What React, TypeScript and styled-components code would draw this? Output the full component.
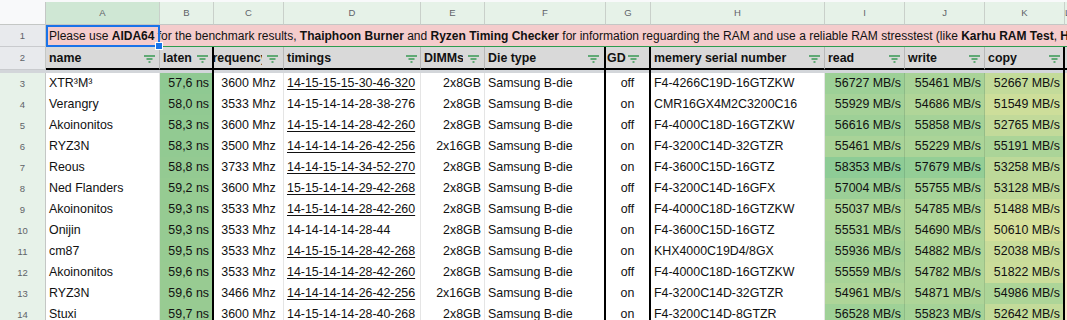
import React from 'react';
import styled, { createGlobalStyle } from 'styled-components';

const GlobalStyle = createGlobalStyle`
  html, body { margin: 0; padding: 0; background: #fff; overflow: hidden; }
  body { font-family: "Liberation Sans", Arial, sans-serif; }
`;

const TEMPLATE = '46px 114px 54px 70px 137px 64px 121px 45px 174px 80px 80px 80px 1fr';

type Align = 'left' | 'right' | 'center';

interface ColDef {
  letter: string;
  head: string;
  headAlign: Align;
  align: Align;
  thick?: boolean;
  gap: number;
  lead?: number;
  pad?: number;
}

const COLS: ColDef[] = [
  { letter: 'A', head: 'name', headAlign: 'left', align: 'left', gap: 4 },
  { letter: 'B', head: 'latency', headAlign: 'left', align: 'right', thick: true, gap: 4 },
  { letter: 'C', head: 'frequency', headAlign: 'center', align: 'center', gap: 5 },
  { letter: 'D', head: 'timings', headAlign: 'left', align: 'left', gap: 3 },
  { letter: 'E', head: 'DIMMs', headAlign: 'left', align: 'right', gap: 5 },
  { letter: 'F', head: 'Die type', headAlign: 'left', align: 'left', thick: true, gap: 5 },
  { letter: 'G', head: 'GDM', headAlign: 'left', align: 'center', thick: true, gap: 10, lead: 2, pad: 1 },
  { letter: 'H', head: 'memery serial number', headAlign: 'left', align: 'left', gap: 4 },
  { letter: 'I', head: 'read', headAlign: 'left', align: 'right', gap: 4 },
  { letter: 'J', head: 'write', headAlign: 'left', align: 'right', gap: 4 },
  { letter: 'K', head: 'copy', headAlign: 'left', align: 'right', thick: true, gap: 3 },
];

interface Entry {
  name: string;
  lat: number;
  freq: number;
  timings: string;
  link: boolean;
  dimms: string;
  gdm: 'on' | 'off';
  serial: string;
  read: number;
  write: number;
  copy: number;
}

const DATA: Entry[] = [
  { name: 'XTR³M³', lat: 57.6, freq: 3600, timings: '14-15-15-15-30-46-320', link: true, dimms: '2x8GB', gdm: 'off', serial: 'F4-4266C19D-16GTZKW', read: 56727, write: 55461, copy: 52667 },
  { name: 'Verangry', lat: 58.0, freq: 3533, timings: '14-15-14-14-28-38-276', link: false, dimms: '2x8GB', gdm: 'on', serial: 'CMR16GX4M2C3200C16', read: 55929, write: 54686, copy: 51549 },
  { name: 'Akoinonitos', lat: 58.3, freq: 3600, timings: '14-15-14-14-28-42-260', link: true, dimms: '2x8GB', gdm: 'off', serial: 'F4-4000C18D-16GTZKW', read: 56616, write: 55858, copy: 52765 },
  { name: 'RYZ3N', lat: 58.3, freq: 3500, timings: '14-14-14-14-26-42-256', link: true, dimms: '2x16GB', gdm: 'on', serial: 'F4-3200C14D-32GTZR', read: 55461, write: 55229, copy: 55191 },
  { name: 'Reous', lat: 58.8, freq: 3733, timings: '14-14-15-14-34-52-270', link: true, dimms: '2x8GB', gdm: 'on', serial: 'F4-3600C15D-16GTZ', read: 58353, write: 57679, copy: 53258 },
  { name: 'Ned Flanders', lat: 59.2, freq: 3600, timings: '15-15-14-14-29-42-268', link: true, dimms: '2x8GB', gdm: 'off', serial: 'F4-3200C14D-16GFX', read: 57004, write: 55755, copy: 53128 },
  { name: 'Akoinonitos', lat: 59.3, freq: 3533, timings: '14-15-14-14-28-42-260', link: true, dimms: '2x8GB', gdm: 'off', serial: 'F4-4000C18D-16GTZKW', read: 55037, write: 54785, copy: 51488 },
  { name: 'Onijin', lat: 59.3, freq: 3533, timings: '14-14-14-14-28-44', link: false, dimms: '2x8GB', gdm: 'on', serial: 'F4-3600C15D-16GTZ', read: 55531, write: 54690, copy: 50610 },
  { name: 'cm87', lat: 59.5, freq: 3533, timings: '14-15-15-14-28-42-268', link: true, dimms: '2x8GB', gdm: 'on', serial: 'KHX4000C19D4/8GX', read: 55936, write: 54882, copy: 52038 },
  { name: 'Akoinonitos', lat: 59.6, freq: 3533, timings: '14-15-14-14-28-42-260', link: true, dimms: '2x8GB', gdm: 'off', serial: 'F4-4000C18D-16GTZKW', read: 55559, write: 54782, copy: 51822 },
  { name: 'RYZ3N', lat: 59.6, freq: 3466, timings: '14-14-14-14-26-42-256', link: true, dimms: '2x16GB', gdm: 'on', serial: 'F4-3200C14D-32GTZR', read: 54961, write: 54871, copy: 54986 },
  { name: 'Stuxi', lat: 59.7, freq: 3600, timings: '14-15-14-14-28-40-268', link: false, dimms: '2x8GB', gdm: 'on', serial: 'F4-3200C14D-8GTZR', read: 56528, write: 55823, copy: 52642 },
];

const lerp = (a: number[], b: number[], t: number) => {
  const k = Math.max(0, Math.min(1, t));
  const c = a.map((v, i) => Math.round(v + (b[i] - v) * k));
  return `rgb(${c[0]}, ${c[1]}, ${c[2]})`;
};

const mbColor = (v: number) => lerp([214, 224, 155], [142, 204, 150], (v - 50610) / (58353 - 50610));
const latColor = (v: number) => lerp([143, 201, 146], [152, 203, 146], (v - 57.6) / (59.7 - 57.6));
const fmtLat = (v: number) => `${v.toFixed(1).replace('.', ',')} ns`;

/* ---------- styled parts ---------- */

const Sheet = styled.div`
  width: 1067px;
  height: 320px;
  overflow: hidden;
  background: #fff;
  font-family: "Liberation Sans", Arial, sans-serif;
  font-size: 12.4px;
  color: #000;
`;

const TopStrip = styled.div`
  height: 2px;
  overflow: hidden;
  background: #f8f9fa;
  padding-left: 57px;
`;

const StripGhost = styled.span`
  display: block;
  margin-top: -9px;
  font-size: 11px;
  line-height: 11px;
  color: #333;
`;

const GridRow = styled.div<{ $h: number }>`
  display: grid;
  grid-template-columns: ${TEMPLATE};
  height: ${(p) => p.$h}px;
`;

const Corner = styled.div`
  background: #f8f9fa;
  border-right: 1px solid #c4c7c5;
  border-bottom: 1px solid #c4c7c5;
`;

const ColLetter = styled.div<{ $selected?: boolean }>`
  background: ${(p) => (p.$selected ? '#cfe7d4' : '#e6f2e8')};
  border-right: 1px solid #c9d0ca;
  border-bottom: 1px solid #c4c7c5;
  color: #5f6368;
  font-size: 9.5px;
  line-height: 22px;
  text-align: center;
`;

const RowNum = styled.div<{ $frozen?: boolean }>`
  background: ${(p) => (p.$frozen ? '#e8eaed' : '#e7f2e9')};
  border-right: 1px solid #c4c7c5;
  border-bottom: 1px solid ${(p) => (p.$frozen ? '#c9cbce' : '#d6ddd7')};
  color: #5f6368;
  font-size: 9.5px;
  line-height: 21px;
  text-align: center;
`;

const Banner = styled.div`
  grid-column: 2 / -1;
  position: relative;
  background: #f4cccc;
  border-bottom: 1px solid #2e9c4f;
  min-width: 0;
`;

const BannerText = styled.div`
  height: 100%;
  overflow: hidden;
  white-space: nowrap;
  padding: 1px 3px 0;
  font-size: 12px;
  line-height: 20px;
  color: #111;
`;

const Selection = styled.div`
  position: absolute;
  left: 0;
  top: 0;
  width: 114px;
  height: 22px;
  box-sizing: border-box;
  border: 2px solid #1a73e8;
  z-index: 3;
`;

const Handle = styled.div`
  position: absolute;
  left: 107px;
  top: 15px;
  width: 8px;
  height: 8px;
  box-sizing: border-box;
  background: #1a73e8;
  border: 1px solid #fff;
`;

const HeadCell = styled.div<{ $thick?: boolean }>`
  display: flex;
  min-width: 0;
  background: #d9d9d9;
  border-right: ${(p) => (p.$thick ? '2px solid #000' : '1px solid #b8b8b8')};
  border-bottom: 2px solid #000;
  font-weight: bold;
  color: #111;
`;

const HeadLabel = styled.div<{ $align: Align; $pad: number }>`
  flex: 1;
  min-width: 0;
  overflow: hidden;
  display: flex;
  justify-content: ${(p) => (p.$align === 'center' ? 'center' : 'flex-start')};
  padding: 2px 0 0 ${(p) => (p.$align === 'center' ? 0 : p.$pad)}px;
  white-space: nowrap;
  line-height: 19px;
`;

const FilterButton = styled.div<{ $gap: number; $lead: number }>`
  flex: none;
  display: flex;
  align-items: center;
  padding: 2px ${(p) => p.$gap}px 0 ${(p) => p.$lead}px;
  background: #d9d9d9;
`;

const HeadFill = styled.div`
  background: #d9d9d9;
  border-bottom: 2px solid #000;
`;

const BandCell = styled.div<{ $thick?: boolean }>`
  background: #d3d6da;
  border-right: ${(p) => (p.$thick ? '2px solid #000' : 'none')};
`;

const Cell = styled.div<{ $align: Align; $bg?: string; $thick?: boolean; $link?: boolean }>`
  min-width: 0;
  overflow: hidden;
  white-space: nowrap;
  padding: 0 3px;
  line-height: 21px;
  text-align: ${(p) => p.$align};
  background: ${(p) => p.$bg || '#fff'};
  border-right: ${(p) => (p.$thick ? '2px solid #000' : '1px solid rgba(0, 0, 0, 0.1)')};
  border-bottom: 1px solid rgba(0, 0, 0, 0.1);
  text-decoration: ${(p) => (p.$link ? 'underline' : 'none')};
  text-underline-offset: 2px;
  color: #111;
`;

const FillCell = styled.div`
  background: #fce5cd;
  border-bottom: 1px solid rgba(0, 0, 0, 0.08);
`;

const FilterIcon = () => (
  <svg width="11" height="8" viewBox="0 0 11 8" aria-hidden="true">
    <g stroke="#1e8e3e" strokeWidth="1.3" strokeLinecap="butt">
      <line x1="0" y1="1" x2="11" y2="1" />
      <line x1="2.5" y1="4" x2="8.5" y2="4" />
      <line x1="4.5" y1="7" x2="6.5" y2="7" />
    </g>
  </svg>
);

export default function App() {
  return (
    <>
      <GlobalStyle />
      <Sheet>
        <TopStrip>
          <StripGhost>mm mm</StripGhost>
        </TopStrip>

        <GridRow $h={23}>
          <Corner />
          {COLS.map((c) => (
            <ColLetter key={c.letter} $selected={c.letter === 'A'}>
              {c.letter}
            </ColLetter>
          ))}
          <ColLetter>L</ColLetter>
        </GridRow>

        <GridRow $h={22}>
          <RowNum $frozen>1</RowNum>
          <Banner>
            <BannerText>
              Please use <b>AIDA64</b> for the benchmark results, <b>Thaiphoon Burner</b> and{' '}
              <b>Ryzen Timing Checker</b> for information reguarding the RAM and use a reliable RAM
              stresstest (like <b>Karhu RAM Test</b>, <b>HCI MemTest</b>) to check stability
            </BannerText>
            <Selection>
              <Handle />
            </Selection>
          </Banner>
        </GridRow>

        <GridRow $h={23}>
          <RowNum $frozen>2</RowNum>
          {COLS.map((c) => (
            <HeadCell key={c.letter} $thick={c.thick}>
              <HeadLabel $align={c.headAlign} $pad={c.pad ?? 3}>
                <span>{c.head}</span>
              </HeadLabel>
              <FilterButton $gap={c.gap} $lead={c.lead ?? 5}>
                <FilterIcon />
              </FilterButton>
            </HeadCell>
          ))}
          <HeadFill />
        </GridRow>

        <GridRow $h={3}>
          <BandCell />
          {COLS.map((c) => (
            <BandCell key={c.letter} $thick={c.thick} />
          ))}
          <BandCell />
        </GridRow>

        {DATA.map((d, i) => (
          <GridRow key={i} $h={21}>
            <RowNum>{i + 3}</RowNum>
            <Cell $align="left">{d.name}</Cell>
            <Cell $align="right" $bg={latColor(d.lat)} $thick>
              {fmtLat(d.lat)}
            </Cell>
            <Cell $align="center">{d.freq} Mhz</Cell>
            <Cell $align="left" $link={d.link}>
              {d.timings}
            </Cell>
            <Cell $align="right">{d.dimms}</Cell>
            <Cell $align="left" $thick>
              Samsung B-die
            </Cell>
            <Cell $align="center" $thick>
              {d.gdm}
            </Cell>
            <Cell $align="left">{d.serial}</Cell>
            <Cell $align="right" $bg={mbColor(d.read)}>
              {d.read} MB/s
            </Cell>
            <Cell $align="right" $bg={mbColor(d.write)}>
              {d.write} MB/s
            </Cell>
            <Cell $align="right" $bg={mbColor(d.copy)} $thick>
              {d.copy} MB/s
            </Cell>
            <FillCell />
          </GridRow>
        ))}
      </Sheet>
    </>
  );
}
